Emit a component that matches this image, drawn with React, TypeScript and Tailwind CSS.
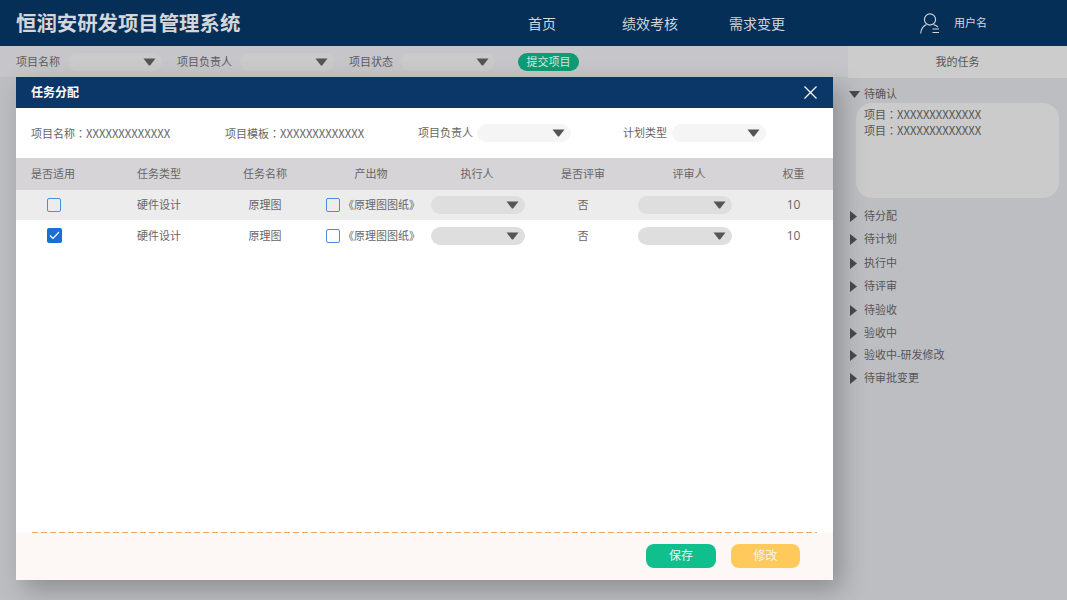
const fontStyle = "font-['Open_Sans','Noto_Sans_CJK_SC',sans-serif]";

function Arrow({className = ""}: {className?: string}) {
    return (
        <svg width="13" height="8" viewBox="0 0 13 8" className={className}>
            <path d="M0.5 0.5 H12.5 L7.5 7 Q6.5 8 5.5 7 Z" fill="#555555"/>
        </svg>
    );
}

function Select({width, bg}: {width: string; bg: string}) {
    return (
        <div className={`${width} ${bg} h-[18px] rounded-[9px] flex items-center justify-end pr-[6px] shrink-0`}>
            <Arrow/>
        </div>
    );
}

function CheckBox({checked}: {checked?: boolean}) {
    if (checked) {
        return (
            <div className="w-[15px] h-[15px] rounded-[2px] bg-[#1a6fd4] flex items-center justify-center">
                <svg width="11" height="9" viewBox="0 0 11 9">
                    <path d="M1 4.5 L4 7.5 L10 1" fill="none" stroke="#ffffff" strokeWidth="1.2"/>
                </svg>
            </div>
        );
    }
    return <div className="w-[14px] h-[14px] rounded-[2px] border border-[#4a8fdc] shrink-0"/>;
}

function Xs() {
    return (
        <>
            <span className="font-['Noto_Sans_CJK_TC',sans-serif]">：</span>
            <span className="font-['Noto_Sans_CJK_SC',sans-serif] text-[11.3px]">XXXXXXXXXXXXX</span>
        </>
    );
}

function Row({checked, bg}: {checked?: boolean; bg: string}) {
    return (
        <div className={`grid grid-cols-[90px_repeat(6,106px)_1fr] items-center text-center text-[#666666] ${bg}`}>
            <div className="flex justify-center pr-[14px]"><CheckBox checked={checked}/></div>
            <div>硬件设计</div>
            <div>原理图</div>
            <div className="flex items-center justify-center gap-[3px] pl-[4px] whitespace-nowrap"><CheckBox/><span>《原理图图纸》</span></div>
            <div className="flex justify-center pl-[2px]"><Select width="w-[94px]" bg="bg-[#dedede]"/></div>
            <div>否</div>
            <div className="flex justify-center pr-[8px]"><Select width="w-[94px]" bg="bg-[#dedede]"/></div>
            <div className="pl-[12px] text-[12px]">10</div>
        </div>
    );
}

function SideItem({label, className}: {label: string; className: string}) {
    return (
        <div className={`flex items-center gap-[7px] pl-[2px] ${className}`}>
            <svg width="7" height="11" viewBox="0 0 7 11"><path d="M0 0 L7 5.5 L0 11 Z" fill="#4a4a4a"/></svg>
            <span>{label}</span>
        </div>
    );
}

export default function App() {
    const columns = ["任务类型", "任务名称", "产出物", "执行人", "是否评审", "评审人"];

    return (
        <div className={`${fontStyle} relative w-[1067px] h-[600px] overflow-hidden bg-[#bdbec2] text-[11px] leading-[16px] text-[#555555]`}>
            <header className="h-[46px] bg-[#062f58] flex items-center text-[#d4d6da]">
                <div className="w-[528px] pl-[16px] pt-[1px] text-[20.4px] font-bold leading-none whitespace-nowrap">恒润安研发项目管理系统</div>
                <nav className="flex text-[14px] w-[392px] pt-[1px]">
                    <span className="w-[94px]">首页</span>
                    <span className="w-[107px]">绩效考核</span>
                    <span>需求变更</span>
                </nav>
                <svg width="20" height="21" viewBox="0 0 20 21" fill="none" stroke="#d4d6da" strokeWidth="1.1">
                    <circle cx="10" cy="6.5" r="5.6"/>
                    <path d="M0.7 20.5 C1 16 3 13.3 6.5 11.6"/>
                    <path d="M13.5 11.6 C15.5 12.4 17 13.2 18 14.2"/>
                    <path d="M12.5 16 H19 M12.5 19.5 H19"/>
                </svg>
                <span className="ml-[14px] text-[11px]">用户名</span>
            </header>

            <div className="flex h-[554px]">
                <main className="w-[848px]">
                    <div className="h-[31px] bg-[#c6c6ca] flex items-center pl-[16px] text-[11px] text-[#5c5c5c] pr-[4px]">
                        <span className="w-[52px]">项目名称</span>
                        <Select width="w-[94px]" bg="bg-[#cacaca]"/>
                        <span className="ml-[15px] w-[63px]">项目负责人</span>
                        <Select width="w-[94px]" bg="bg-[#cacaca]"/>
                        <span className="ml-[15px] w-[52px]">项目状态</span>
                        <Select width="w-[94px]" bg="bg-[#cacaca]"/>
                        <button className="ml-[23px] w-[61px] h-[18px] rounded-[9px] bg-[#0d9c74] text-[#d6e6e0] text-[11px] leading-[18px]">提交项目</button>
                    </div>
                </main>
                <aside className="flex-1">
                    <div className="h-[32px] bg-[#cccccc] flex items-center justify-center text-[#555555]">我的任务</div>
                    <div className="mt-[7px] h-[18px] flex items-center gap-[4px] pl-[1px]">
                        <svg width="11" height="7" viewBox="0 0 11 7"><path d="M0 0 H11 L5.5 7 Z" fill="#4a4a4a"/></svg>
                        <span>待确认</span>
                    </div>
                    <div className="ml-[8px] w-[203px] h-[95px] rounded-[16px] bg-[#cbcbcb] px-[8px] pt-[3px]">
                        <p className="h-[16px] whitespace-nowrap">项目<Xs/></p>
                        <p className="h-[16px] whitespace-nowrap">项目<Xs/></p>
                    </div>
                    <SideItem label="待分配" className="mt-[10px]"/>
                    <SideItem label="待计划" className="mt-[7px]"/>
                    <SideItem label="执行中" className="mt-[8px]"/>
                    <SideItem label="待评审" className="mt-[7px]"/>
                    <SideItem label="待验收" className="mt-[8px]"/>
                    <SideItem label="验收中" className="mt-[7px]"/>
                    <SideItem label="验收中-研发修改" className="mt-[6px]"/>
                    <SideItem label="待审批变更" className="mt-[7px]"/>
                </aside>
            </div>

            <div className="absolute left-[16px] top-[77px] w-[817px] h-[503px] bg-white flex flex-col shadow-[8px_10px_24px_rgba(0,0,0,0.25)]">
                <div className="h-[31px] bg-[#0a3768] flex items-center justify-between pl-[15px] pr-[16px] text-white font-bold text-[12px]">
                    <span>任务分配</span>
                    <svg width="13" height="13" viewBox="0 0 13 13" stroke="#ffffff" strokeWidth="1.2"><path d="M0.5 0.5 L12.5 12.5 M12.5 0.5 L0.5 12.5"/></svg>
                </div>
                <div className="h-[50px] flex items-center pl-[15px] text-[#666666]">
                    <span className="w-[194px] h-[16px] whitespace-nowrap">项目名称<Xs/></span>
                    <span className="w-[193px] h-[16px] whitespace-nowrap">项目模板<Xs/></span>
                    <span className="w-[59px] whitespace-nowrap">项目负责人</span>
                    <Select width="w-[94px]" bg="bg-[#f5f5f5]"/>
                    <span className="ml-[52px] w-[49px]">计划类型</span>
                    <Select width="w-[94px]" bg="bg-[#f5f5f5]"/>
                </div>
                <div className="grid grid-cols-[90px_repeat(6,106px)_1fr] h-[32px] items-center text-center bg-[#d6d4d6] text-[#666666]">
                    <div className="pr-4">是否适用</div>
                    {columns.map((c) => <div key={c}>{c}</div>)}
                    <div className="pl-[12px]">权重</div>
                </div>
                <div className="grid grid-rows-[30px_31px]">
                    <Row bg="bg-[#ececec]"/>
                    <Row checked bg="bg-white"/>
                </div>
                <div className="flex-1"/>
                <div className="mx-[16px] h-px bg-[repeating-linear-gradient(90deg,#f5a462_0_6px,transparent_6px_9px)]"/>
                <div className="h-[47px] bg-[#fdf8f5] flex items-center justify-end pr-[33px] pb-[1px] gap-[15px] text-[12px] text-[#eef5f0]">
                    <button className="w-[70px] h-[24px] rounded-[8px] bg-[#0fc08d]">保存</button>
                    <button className="w-[69px] h-[24px] rounded-[8px] bg-[#ffc95c]">修改</button>
                </div>
            </div>
        </div>
    );
}
